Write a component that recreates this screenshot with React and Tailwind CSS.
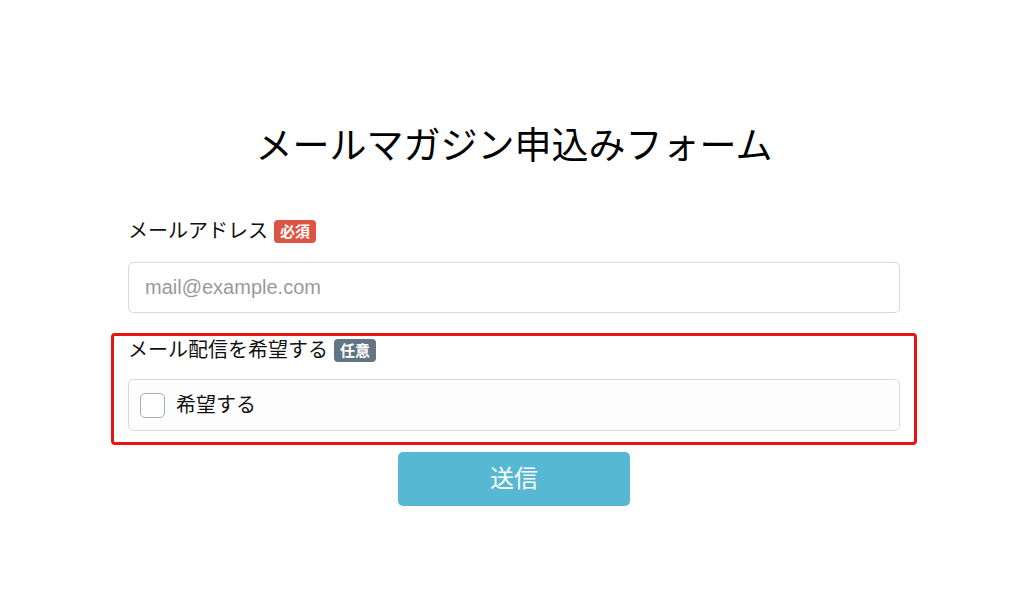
import React from 'react';

const font = { fontFamily: '"Liberation Sans", "Noto Sans CJK JP", sans-serif' };

const Badge = ({ children, tone }) => (
  <span
    className={`ml-[6px] inline-flex h-[23px] items-center rounded-[4px] px-[6px] text-[15px] font-bold leading-none text-white ${
      tone === 'red' ? 'bg-[#dc5443]' : 'bg-[#627583]'
    }`}
  >
    {children}
  </span>
);

export default function App() {
  return (
    <div className="min-h-[605px] w-full bg-white text-[#111]" style={font}>
      <div className="mx-auto w-[806px] translate-x-[2px] pt-[125px]">
        <h1 className="text-center text-[37px] font-normal leading-[44px] text-black">
          メールマガジン申込みフォーム
        </h1>

        {/* メールアドレス */}
        <div className="mt-[50px] px-[17px]">
          <label className="flex h-[24px] items-center text-[20px] leading-[24px]">
            メールアドレス
            <Badge tone="red">必須</Badge>
          </label>
          <input
            type="email"
            placeholder="mail@example.com"
            className="mt-[19px] block h-[51px] w-full rounded-[5px] border border-[#d9d9d9] px-[16px] text-[20px] outline-none placeholder:text-[#9a9a9a]"
            style={font}
          />
        </div>

        {/* メール配信 */}
        <div className="mt-[20px] rounded-[4px] border-[3px] border-[#e81313] px-[14px] pb-[11px] pt-[2px]">
          <label className="flex h-[24px] items-center text-[20px] leading-[24px]">
            メール配信を希望する
            <Badge tone="gray">任意</Badge>
          </label>
          <label className="mt-[17px] flex h-[52px] items-center gap-[11px] rounded-[5px] border border-[#d9d9d9] bg-[#fdfdfd] px-[11px] text-[20px]">
            <span className="block h-[25px] w-[25px] rounded-[5px] border border-[#a3b0bd] bg-white" />
            希望する
          </label>
        </div>

        <div className="mt-[7px] flex justify-center">
          <button className="h-[54px] w-[232px] rounded-[5px] bg-[#56b8d2] text-[24px] text-white">
            送信
          </button>
        </div>
      </div>
    </div>
  );
}
